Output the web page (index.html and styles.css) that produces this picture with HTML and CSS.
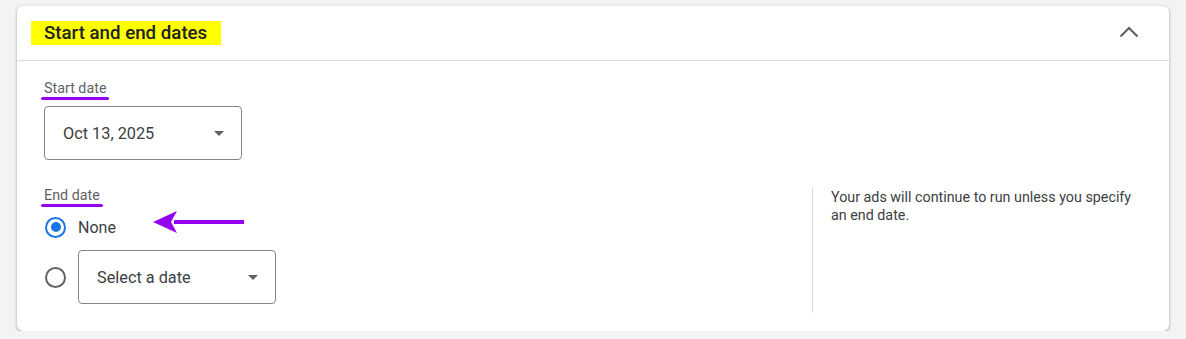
FILE: index.html
```html
<!DOCTYPE html>
<html>
<head>
<meta charset="utf-8">
<link rel="stylesheet" href="styles.css">
</head>
<body>
<div class="card">
  <div class="card-header">
    <h2 class="title"><span class="highlight">Start and end dates</span></h2>
    <svg class="chevron" width="24" height="24" viewBox="0 0 24 24"><path d="M3.5 16.5 L12 8 L20.5 16.5" fill="none" stroke="#5f6368" stroke-width="2.2"/></svg>
  </div>
  <div class="card-body">
    <div class="start-section">
      <div class="label"><span class="mark">Start date</span></div>
      <div class="select">
        <span class="select-text">Oct 13, 2025</span>
        <span class="caret"></span>
      </div>
    </div>
    <div class="end-section">
      <div class="end-left">
        <div class="label"><span class="mark">End date</span></div>
        <div class="radio-row none-row">
          <span class="radio checked"></span>
          <span class="radio-label">None</span>
          <svg class="arrow" width="100" height="30" viewBox="0 0 100 30"><path d="M24 13 H94 V17 H24 Z" fill="#9400ef"/><path d="M3 15 L27 4 L21 15 L27 26 Z" fill="#9400ef"/></svg>
        </div>
        <div class="radio-row">
          <span class="radio"></span>
          <div class="select">
            <span class="select-text">Select a date</span>
            <span class="caret"></span>
          </div>
        </div>
      </div>
      <div class="help">
        <p class="help-text">Your ads will continue to run unless you specify an end date.</p>
      </div>
    </div>
  </div>
</div>
</body>
</html>
```

FILE: styles.css
```css
html, body {
  margin: 0;
  padding: 0;
}
body {
  background: #f1f3f4;
  font-family: Roboto, "Liberation Sans", Arial, sans-serif;
  color: #3c4043;
}
.card {
  margin: 6px 0 0 17px;
  width: 1152px;
  height: 325px;
  background: #fff;
  border-radius: 6px;
  box-shadow: 0 1px 2px rgba(60,64,67,0.3), 0 1px 3px 1px rgba(60,64,67,0.15);
  box-sizing: border-box;
}
.card-header {
  height: 55px;
  box-sizing: border-box;
  border-bottom: 1px solid #dadce0;
  display: flex;
  align-items: center;
  justify-content: space-between;
  padding: 0 28px 0 14px;
}
.title {
  margin: 0;
  font-size: 18.7px;
  font-weight: 500;
  line-height: 24px;
  color: #202124;
  margin-top: -1px;
}
.highlight {
  display: inline-block;
  background: #ffff00;
  padding: 0 14px 0 13px;
  height: 24px;
}
.chevron {
  display: block;
  margin-top: -2px;
}
.card-body {
  padding: 17px 0 0 27px;
}
.label {
  font-size: 14.3px;
  line-height: 20px;
  color: #5f6368;
  height: 20px;
}
.mark {
  position: relative;
  display: inline-block;
}
.mark::after {
  content: "";
  position: absolute;
  left: -3px;
  right: -3px;
  top: 19px;
  height: 3px;
  border-radius: 2px;
  background: #9400ef;
}
.start-section .label {
  margin-bottom: 8px;
}
.select {
  width: 198px;
  height: 54px;
  box-sizing: border-box;
  border: 1px solid #80868b;
  border-radius: 4px;
  display: flex;
  align-items: center;
  justify-content: space-between;
  padding: 0 17px 0 18px;
}
.select-text {
  font-size: 16.3px;
  color: #3c4043;
}
.caret {
  width: 0;
  height: 0;
  border-left: 5.5px solid transparent;
  border-right: 5.5px solid transparent;
  border-top: 5.5px solid #5f6368;
}
.end-section {
  display: flex;
  margin-top: 25px;
}
.end-left {
  flex: 1;
}
.radio-row {
  display: flex;
  align-items: center;
}
.none-row {
  position: relative;
  height: 40px;
  margin-top: 2px;
  margin-bottom: 3px;
}
.radio {
  width: 21px;
  height: 21px;
  box-sizing: border-box;
  border: 2px solid #5f6368;
  border-radius: 50%;
  margin: 0 12px 0 1px;
  position: relative;
  flex: none;
}
.radio.checked {
  border-color: #1a73e8;
}
.radio.checked::after {
  content: "";
  position: absolute;
  left: 3.5px;
  top: 3.5px;
  width: 10px;
  height: 10px;
  border-radius: 50%;
  background: #1a73e8;
}
.radio-label {
  font-size: 16px;
  color: #3c4043;
}
.arrow {
  position: absolute;
  left: 106px;
  top: 0px;
}
.help {
  flex: 0 0 357px;
  box-sizing: border-box;
  border-left: 1px solid #dadce0;
  padding: 1px 28px 0 18px;
  height: 126px;
  margin-top: 2px;
}
.help-text {
  margin: 0;
  font-size: 14.3px;
  line-height: 18px;
  color: #3c4043;
}
```
